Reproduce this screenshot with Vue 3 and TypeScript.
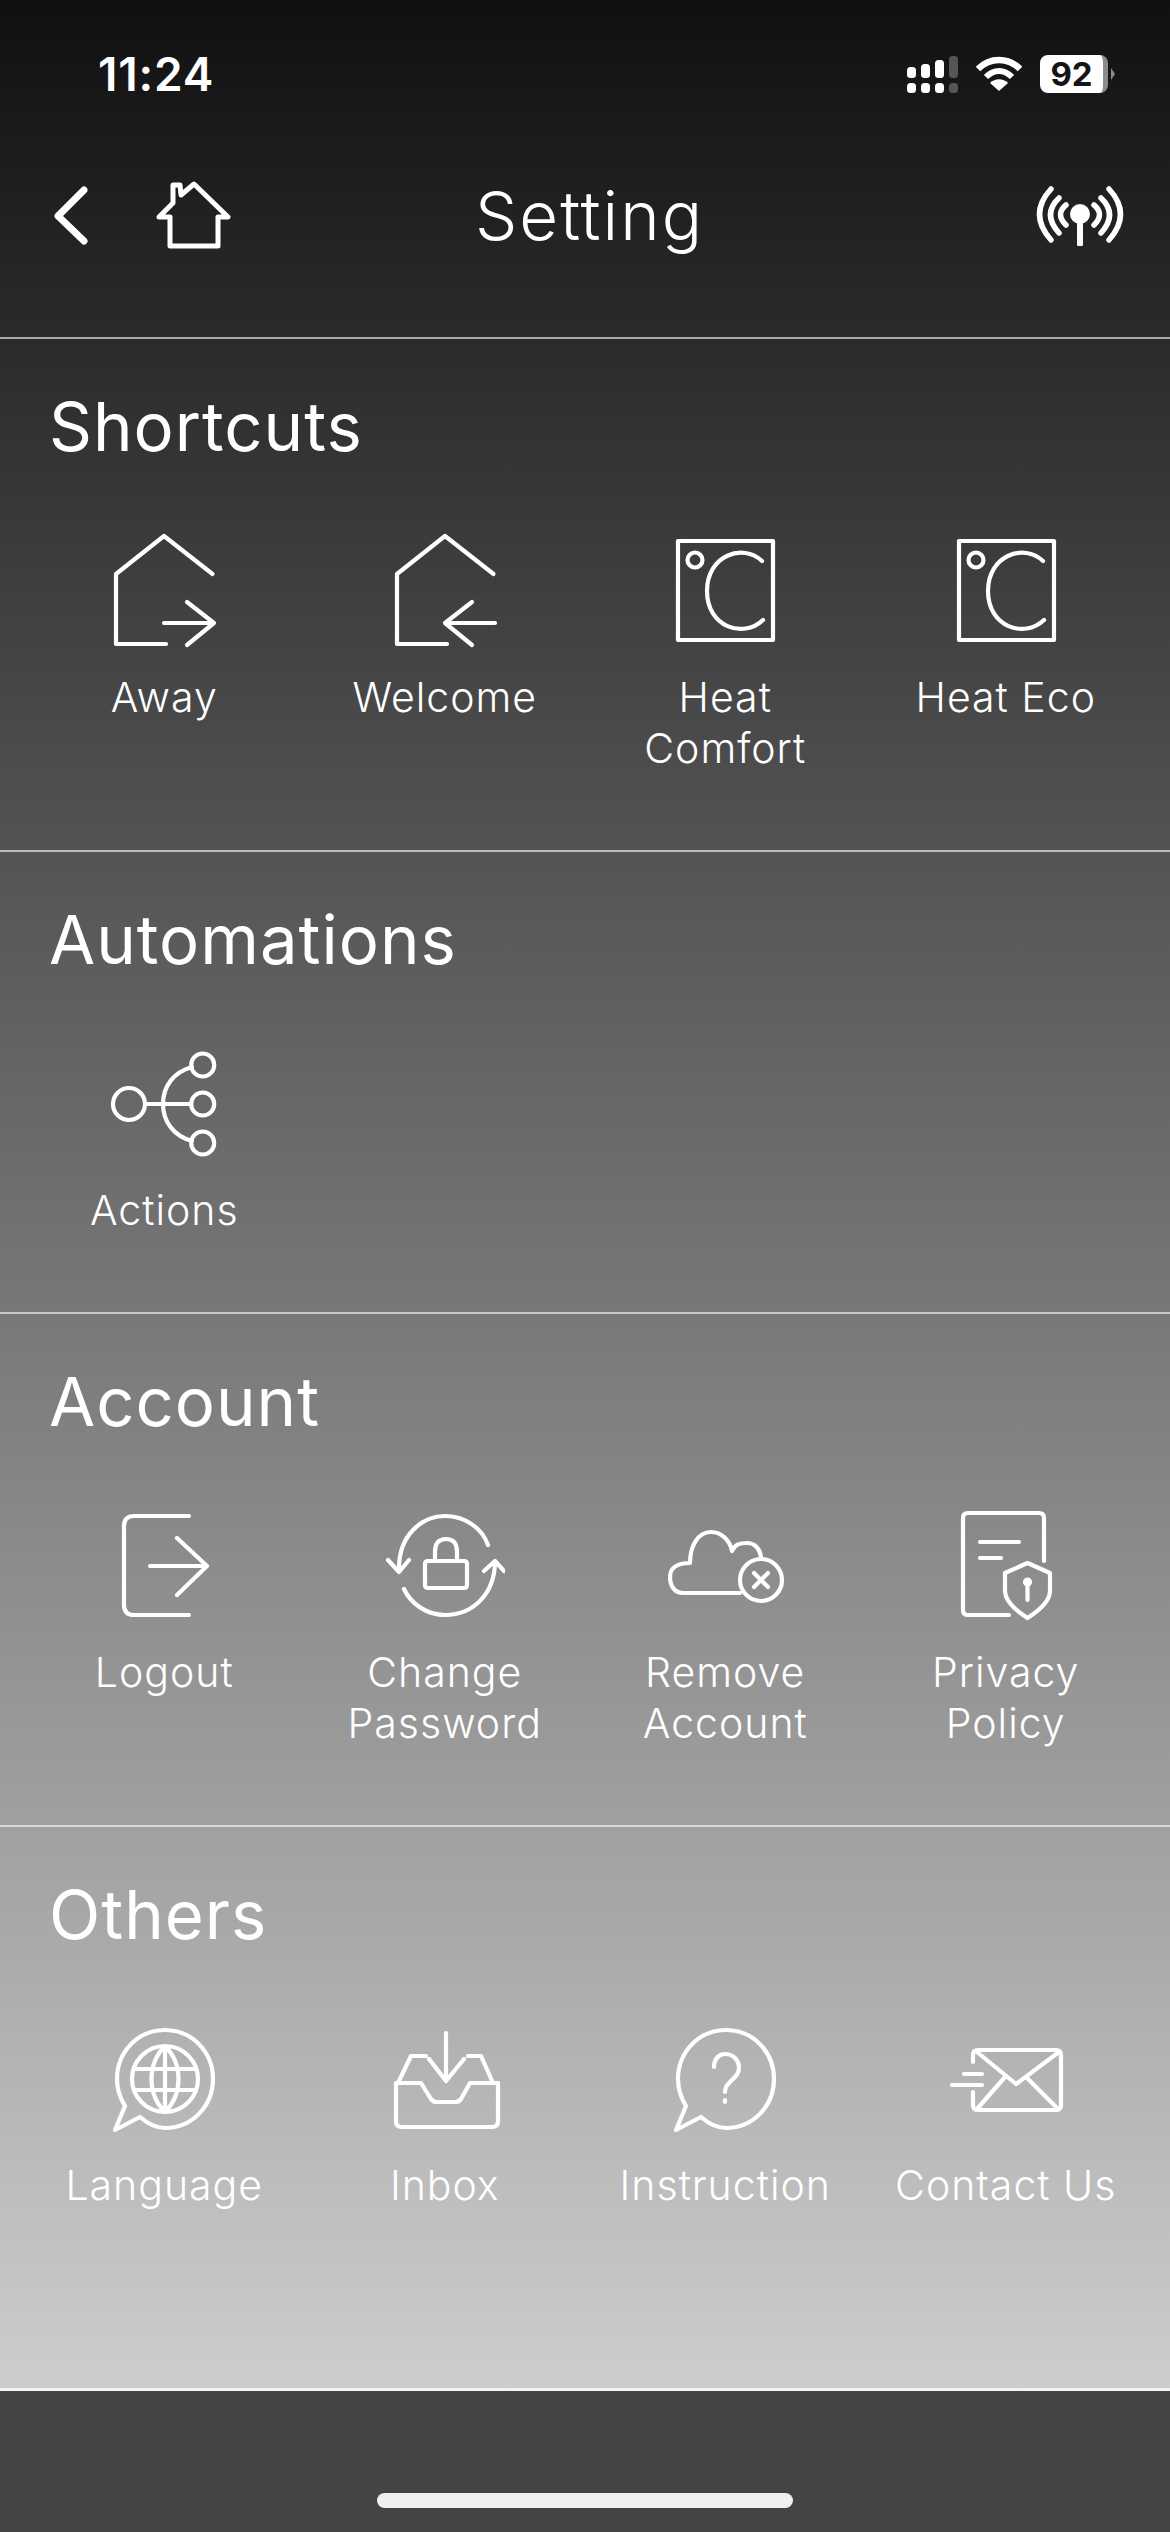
<script setup lang="ts">
interface Item {
  label: string;
  icon: string;
}
interface Section {
  title: string;
  items: Item[];
}

// 円をパスに変換
const circle = (cx: number, cy: number, r: number): string =>
  `M${cx - r} ${cy}a${r} ${r} 0 1 0 ${r * 2} 0a${r} ${r} 0 1 0 ${-r * 2} 0`;

const bubble =
  "M21 87L11 111L36 98C44 105 52 109 61 109C88 109 109 87 109 60C109 33 88 11 61 11C34 11 13 33 13 60C13 70 16 79 21 87Z";

const heat =
  "M13 10H108V109H13Z" + circle(30, 29, 7.5) + "M97 30C78 12 42 24 42 60C42 96 78 108 98 89";

const icons: Record<string, string> = {
  away: "M62 113H12V43L60 5L108.5 43M60 92H110M83 71L110 92L83 114",
  welcome: "M62 113H12V43L60 5L108.5 43M110 92H60M87 71L60 92L87 114",
  heat,
  actions:
    circle(25, 60, 16) +
    circle(98.7, 21, 11.5) +
    circle(98.7, 60, 11.5) +
    circle(98.7, 99, 11.5) +
    "M41 60H87M88 23C70 28 59 42 59 60C59 78 70 92 88 97",
  logout: "M85 10H30Q20 10 20 20V99Q20 109 30 109H85M46 60H103M73 32L103 60L73 89",
  password:
    "M14 62C14 30 36 10 60 10C80 10 97 22 103 39M3 54L14 66L24 54M19 83C26 98 42 109 60 109C88 109 110 88 110 55M99 65L110 55L119 65M43 55H79Q82 55 82 58V79Q82 82 79 82H43Q40 82 40 79V58Q40 55 43 55ZM50 55V46C50 37 54 33 61 33C68 33 72 37 72 46V55",
  remove:
    "M75 87H18C9 87 5 79 5 71C5 63 11 57 25 57C25 40 33 26 46 26C57 26 65 35 67 45C70 38 75 37 82 37C90 37 95 43 96 51" +
    circle(96, 74, 21) +
    "M89 67L103 81M103 67L89 81",
  privacy:
    "M98 55V12Q98 7 93 7H22Q17 7 17 12V104Q17 109 22 109H63M34 36H73M34 52H55M81.5 57L104 67V85C104 95 94 104 81.5 112C69 104 59 95 59 85V67ZM81.5 76V94" +
    circle(81.5, 76, 2.5),
  language:
    bubble +
    circle(61, 60, 33) +
    "M61 27C43 45 43 75 61 93C79 75 79 45 61 27ZM61 27V93M30 50H92M30 71H92",
  inbox:
    "M11 64H36L46 80Q48 83 52 83H70Q74 83 76 80L85 64H113V102Q113 108 107 108H17Q11 108 11 102ZM13 64L26 37H41M108 64L96 37H83M61 14V61M44 40L61 62L79 40",
  instruction: bubble + "M49 48C49 40 54 35 60 35C68 35 74 41 74 49C74 55 70 58 66 62C62 66 60 68 60 73M60 81V83",
  contact:
    "M27 43V36Q27 31 32 31H110Q115 31 115 36V86Q115 91 110 91H32Q27 91 27 86V73M31 33L70 65L113 33M31 90L59 58M112 90L80 58M18 55H36M6 66H36",
};

const sections: Section[] = [
  {
    title: "Shortcuts",
    items: [
      { label: "Away", icon: "away" },
      { label: "Welcome", icon: "welcome" },
      { label: "Heat\nComfort", icon: "heat" },
      { label: "Heat Eco", icon: "heat" },
    ],
  },
  {
    title: "Automations",
    items: [{ label: "Actions", icon: "actions" }],
  },
  {
    title: "Account",
    items: [
      { label: "Logout", icon: "logout" },
      { label: "Change\nPassword", icon: "password" },
      { label: "Remove\nAccount", icon: "remove" },
      { label: "Privacy\nPolicy", icon: "privacy" },
    ],
  },
  {
    title: "Others",
    items: [
      { label: "Language", icon: "language" },
      { label: "Inbox", icon: "inbox" },
      { label: "Instruction", icon: "instruction" },
      { label: "Contact Us", icon: "contact" },
    ],
  },
];
</script>

<template>
  <div class="page">
    <main class="main">
      <header class="header">
        <div class="status">
          <span class="time">11:24</span>
          <div class="status-icons">
            <svg class="signal" width="51" height="37" viewBox="0 0 51 37" fill="#fff">
              <rect x="0" y="27" width="9" height="10" rx="3.5" />
              <rect x="14" y="27" width="9" height="10" rx="3.5" />
              <rect x="28" y="27" width="9" height="10" rx="3.5" />
              <rect x="42" y="27" width="9" height="10" rx="3.5" fill="#555" />
              <rect x="0" y="11" width="9" height="11" rx="3.5" />
              <rect x="14" y="8" width="9" height="14" rx="3.5" />
              <rect x="28" y="4" width="9" height="18" rx="3.5" />
              <rect x="42" y="0" width="9" height="22" rx="3.5" fill="#555" />
            </svg>
            <svg class="wifi" width="48" height="35" viewBox="0 0 48 35" fill="none" stroke="#fff">
              <path d="M3 13C15 1 33 1 45 13" stroke-width="6.5" />
              <path d="M11 21C19 13 29 13 37 21" stroke-width="6" />
              <path d="M24 35L15 27C20 22 28 22 33 27Z" fill="#fff" stroke="none" />
            </svg>
            <div class="battery"><span>92</span></div>
            <div class="battery-tip"></div>
          </div>
        </div>
        <nav class="nav">
          <div class="nav-left">
            <svg class="back" width="40" height="64" viewBox="0 0 40 64" fill="none" stroke="#fff" stroke-width="7" stroke-linecap="round" stroke-linejoin="round">
              <path d="M31 6L5 32L31 57" />
            </svg>
            <svg class="home" width="76" height="70" viewBox="0 0 76 70" fill="none" stroke="#fff" stroke-width="5" stroke-linecap="round" stroke-linejoin="round">
              <path d="M15 36H4L18 22V4H25L26 14L39 3L73 36H63V65H15Z" />
            </svg>
          </div>
          <h1 class="nav-title">Setting</h1>
          <svg class="antenna" width="90" height="60" viewBox="0 0 90 60" fill="none" stroke="#fff" stroke-width="5.5" stroke-linecap="round">
            <circle cx="44" cy="28" r="10" fill="#fff" stroke="none" />
            <path d="M44 30V58" stroke-width="6" />
            <path d="M30 19Q19 28 30 39M58 19Q69 28 58 39" />
            <path d="M23 12Q6 28 23 47M65 12Q82 28 65 47" />
            <path d="M15 3Q-8 28 15 54M73 3Q96 28 73 54" />
          </svg>
        </nav>
      </header>

      <section v-for="section in sections" :key="section.title" class="section">
        <h2 class="section-title">{{ section.title }}</h2>
        <div class="grid">
          <div v-for="item in section.items" :key="item.label" class="item">
            <svg class="icon" width="120" height="120" viewBox="0 0 120 120" fill="none" stroke="#fff" stroke-width="4.2" stroke-linecap="round" stroke-linejoin="round">
              <path :d="icons[item.icon]" />
            </svg>
            <span class="label">{{ item.label }}</span>
          </div>
        </div>
      </section>
    </main>

    <footer class="footer">
      <div class="home-bar"></div>
    </footer>
  </div>
</template>

<style scoped>
.page {
  display: flex;
  flex-direction: column;
  height: 2532px;
  font-family: Inter, "Liberation Sans", sans-serif;
  color: #fff;
}

.main {
  flex: 1;
  display: flex;
  flex-direction: column;
  background: linear-gradient(to bottom, #101010, #cdcdcd);
}

/* header */
.header {
  height: 337px;
  box-sizing: border-box;
}

.status {
  display: flex;
  justify-content: space-between;
  align-items: flex-start;
  height: 181px;
  box-sizing: border-box;
  padding: 55px 55px 0 98px;
}

.time {
  font-size: 46px;
  font-weight: 600;
  line-height: 38px;
  letter-spacing: 0.8px;
}

.status-icons {
  display: flex;
  align-items: flex-start;
}

.signal {
  margin-top: 1px;
  margin-left: 0;
}

.wifi {
  margin: 1px 0 0 17px;
}

.battery {
  width: 63px;
  height: 38px;
  margin-left: 17px;
  box-sizing: content-box;
  background: #fff;
  border-right: 5px solid #8c8c8c;
  border-radius: 8px;
  color: #151515;
  font-size: 33px;
  font-weight: 700;
  line-height: 38px;
  text-align: center;
}

.battery-tip {
  width: 0;
  height: 0;
  margin: 13px 0 0 3px;
  border-left: 4px solid #8c8c8c;
  border-top: 6px solid transparent;
  border-bottom: 6px solid transparent;
}

.nav {
  display: grid;
  grid-template-columns: 1fr auto 1fr;
  align-items: center;
  padding: 0 44px 0 53px;
}

.nav-left {
  display: flex;
  align-items: center;
  gap: 62px;
}

.nav-title {
  margin: 0;
  font-size: 67px;
  font-weight: 300;
  line-height: 68px;
  letter-spacing: 2px;
}

.antenna {
  justify-self: end;
}

/* sections */
.section {
  border-top: 2px solid rgba(255, 255, 255, 0.6);
  padding: 48px 24px 76.5px;
}

.section:last-child {
  flex: 1;
}

.section-title {
  margin: 0 0 64px;
  padding-left: 25px;
  font-size: 67px;
  font-weight: 400;
  line-height: 80px;
  letter-spacing: 1px;
}

.grid {
  display: grid;
  grid-template-columns: repeat(4, 1fr);
}

.item {
  display: flex;
  flex-direction: column;
  align-items: center;
}

.icon {
  display: block;
}

.label {
  margin-top: 20.5px;
  font-size: 41px;
  font-weight: 300;
  line-height: 51px;
  letter-spacing: 1px;
  text-align: center;
  white-space: pre-line;
}

/* footer */
.footer {
  display: flex;
  justify-content: center;
  align-items: flex-end;
  height: 144px;
  box-sizing: border-box;
  border-top: 3px solid #f4f4f4;
  background: #444;
  padding-bottom: 24px;
}

.home-bar {
  width: 416px;
  height: 15px;
  border-radius: 8px;
  background: #f0f0f0;
}
</style>
